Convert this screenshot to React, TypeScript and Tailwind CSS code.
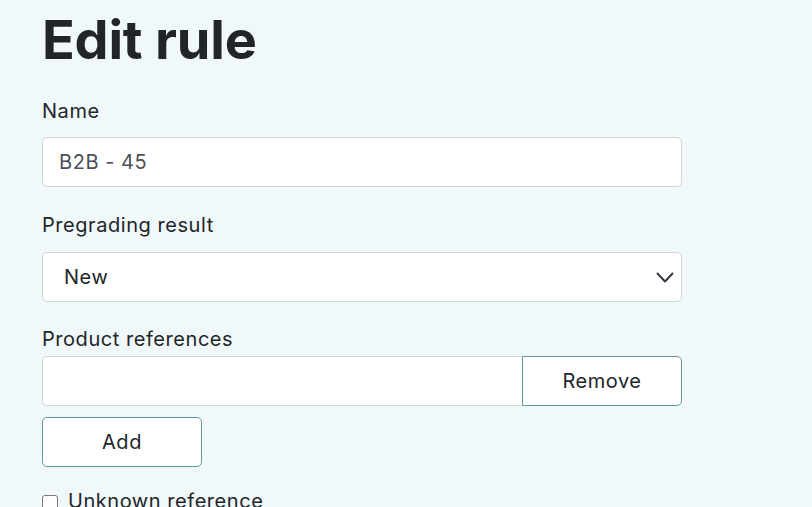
import React from "react";

export default function App() {
  return (
    <div
      className="min-h-[507px] w-full bg-[#f1f8fa] text-[#212529]"
      style={{ fontFamily: "Inter, 'Noto Sans', sans-serif" }}
    >
      <div className="w-[640px] pl-[42px] pt-[7px] box-content">
        <h1 className="mb-[24px] text-[54px] font-bold leading-[65px] tracking-[-0.2px] text-[#212529]">
          Edit rule
        </h1>

        <div className="mb-[23px]">
          <label className="mb-[11px] block text-[20px] leading-[30px] tracking-[0.55px]">Name</label>
          <input
            readOnly
            value="B2B - 45"
            className="block h-[50px] w-full rounded-[5px] border border-[#ced4da] bg-white px-[16px] text-[20px] leading-[30px] tracking-[0.55px] text-[#495057] outline-none"
          />
        </div>

        <div className="mb-[22px]">
          <label className="mb-[12px] block text-[20px] leading-[30px] tracking-[0.55px]">Pregrading result</label>
          <div className="relative flex h-[50px] w-full items-center rounded-[5px] border border-[#ced4da] bg-white pl-[21px] text-[20px] leading-[30px] tracking-[0.55px] text-[#212529]">
            New
            <svg
              className="absolute right-[7px] top-[19px]"
              width="18"
              height="12"
              viewBox="0 0 18 12"
              fill="none"
            >
              <polyline
                points="1.5,1.5 9,9.5 16.5,1.5"
                stroke="#343a40"
                strokeWidth="2"
                strokeLinecap="round"
                strokeLinejoin="round"
              />
            </svg>
          </div>
        </div>

        <div>
          <label className="mb-[2px] block text-[20px] leading-[30px] tracking-[0.55px]">Product references</label>
          <div className="flex h-[50px] w-full">
            <input
              readOnly
              value=""
              className="h-full w-[480px] rounded-l-[5px] border border-r-0 border-[#ced4da] bg-white px-[16px] text-[20px] outline-none"
            />
            <button className="flex h-full w-[160px] items-center justify-center rounded-r-[5px] border border-[#5f9a9c] bg-white text-[20px] leading-[30px] tracking-[0.55px] text-[#212529]">
              Remove
            </button>
          </div>
          <button className="mt-[11px] flex h-[50px] w-[160px] items-center justify-center rounded-[5px] border border-[#5f9a9c] bg-white text-[20px] leading-[30px] tracking-[0.55px] text-[#212529]">
            Add
          </button>
        </div>

        <div className="mt-[27px] flex items-start gap-[10px]">
          <span className="mt-[1px] block h-[16px] w-[16px] shrink-0 rounded-[3px] border border-[#767676] bg-white" />
          <span className="-mt-[8px] text-[20px] leading-[30px] tracking-[0.55px]">Unknown reference</span>
        </div>
      </div>
    </div>
  );
}
